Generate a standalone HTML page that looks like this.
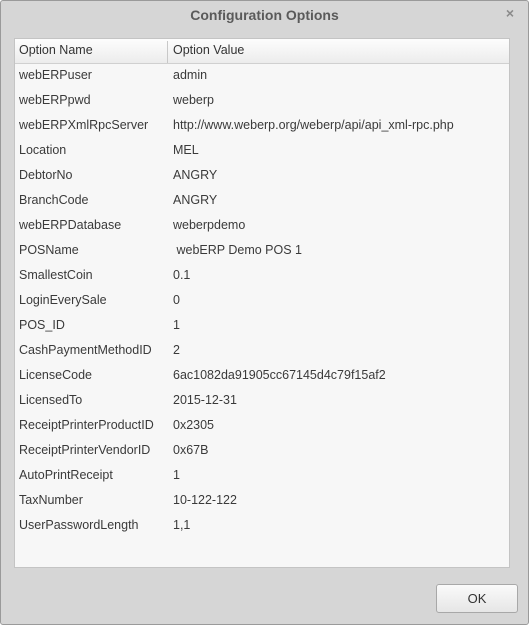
<!DOCTYPE html>
<html><head><style>
body{margin:0;width:529px;height:625px;overflow:hidden;font-family:"Liberation Sans","DejaVu Sans",sans-serif;}
.win{position:absolute;left:0;top:0;width:527px;height:623px;background:#d6d6d6;border:1px solid #9a9a9a;border-radius:3px;}
.title{position:absolute;left:0;right:0;top:6px;text-align:center;font-weight:bold;font-size:14px;color:#5a5a5a;}
.x{position:absolute;right:14px;top:4px;font-size:14px;color:#8a8a8a;font-weight:bold;}
.tbl{position:absolute;left:13px;top:37px;width:494px;height:528px;background:#f7f7f7;border:1px solid #c4c4c4;}
.hd{height:24px;background:linear-gradient(#fdfdfd,#ececec);border-bottom:1px solid #d0d0d0;position:relative;font-size:12.5px;color:#333;}
.hd span{position:absolute;top:4px}
.div{position:absolute;left:152px;top:2px;width:1px;height:22px;background:#c8c8c8;}
.row{height:25px;position:relative;font-size:12.5px;color:#3a3a3a;}
.row span{position:absolute;top:4px}
.a{left:4px}.b{left:158px}
.ok{position:absolute;left:435px;top:583px;width:80px;height:27px;border:1px solid #a8a8a8;border-radius:3px;background:linear-gradient(#fafafa,#e6e6e6);font-size:13px;color:#333;text-align:center;line-height:27px;}
</style></head><body>
<div class="win">
<div class="title">Configuration Options</div>
<div class="x">×</div>
<div class="tbl">
<div class="hd"><span class="a">Option Name</span><div class="div"></div><span class="b">Option Value</span></div>
<div class="row"><span class="a">webERPuser</span><span class="b">admin</span></div>
<div class="row"><span class="a">webERPpwd</span><span class="b">weberp</span></div>
<div class="row"><span class="a">webERPXmlRpcServer</span><span class="b">http://www.weberp.org/weberp/api/api_xml-rpc.php</span></div>
<div class="row"><span class="a">Location</span><span class="b">MEL</span></div>
<div class="row"><span class="a">DebtorNo</span><span class="b">ANGRY</span></div>
<div class="row"><span class="a">BranchCode</span><span class="b">ANGRY</span></div>
<div class="row"><span class="a">webERPDatabase</span><span class="b">weberpdemo</span></div>
<div class="row"><span class="a">POSName</span><span class="b">&nbsp;webERP Demo POS 1</span></div>
<div class="row"><span class="a">SmallestCoin</span><span class="b">0.1</span></div>
<div class="row"><span class="a">LoginEverySale</span><span class="b">0</span></div>
<div class="row"><span class="a">POS_ID</span><span class="b">1</span></div>
<div class="row"><span class="a">CashPaymentMethodID</span><span class="b">2</span></div>
<div class="row"><span class="a">LicenseCode</span><span class="b">6ac1082da91905cc67145d4c79f15af2</span></div>
<div class="row"><span class="a">LicensedTo</span><span class="b">2015-12-31</span></div>
<div class="row"><span class="a">ReceiptPrinterProductID</span><span class="b">0x2305</span></div>
<div class="row"><span class="a">ReceiptPrinterVendorID</span><span class="b">0x67B</span></div>
<div class="row"><span class="a">AutoPrintReceipt</span><span class="b">1</span></div>
<div class="row"><span class="a">TaxNumber</span><span class="b">10-122-122</span></div>
<div class="row"><span class="a">UserPasswordLength</span><span class="b">1,1</span></div>
</div>
<div class="ok">OK</div>
</div>
</body></html>
